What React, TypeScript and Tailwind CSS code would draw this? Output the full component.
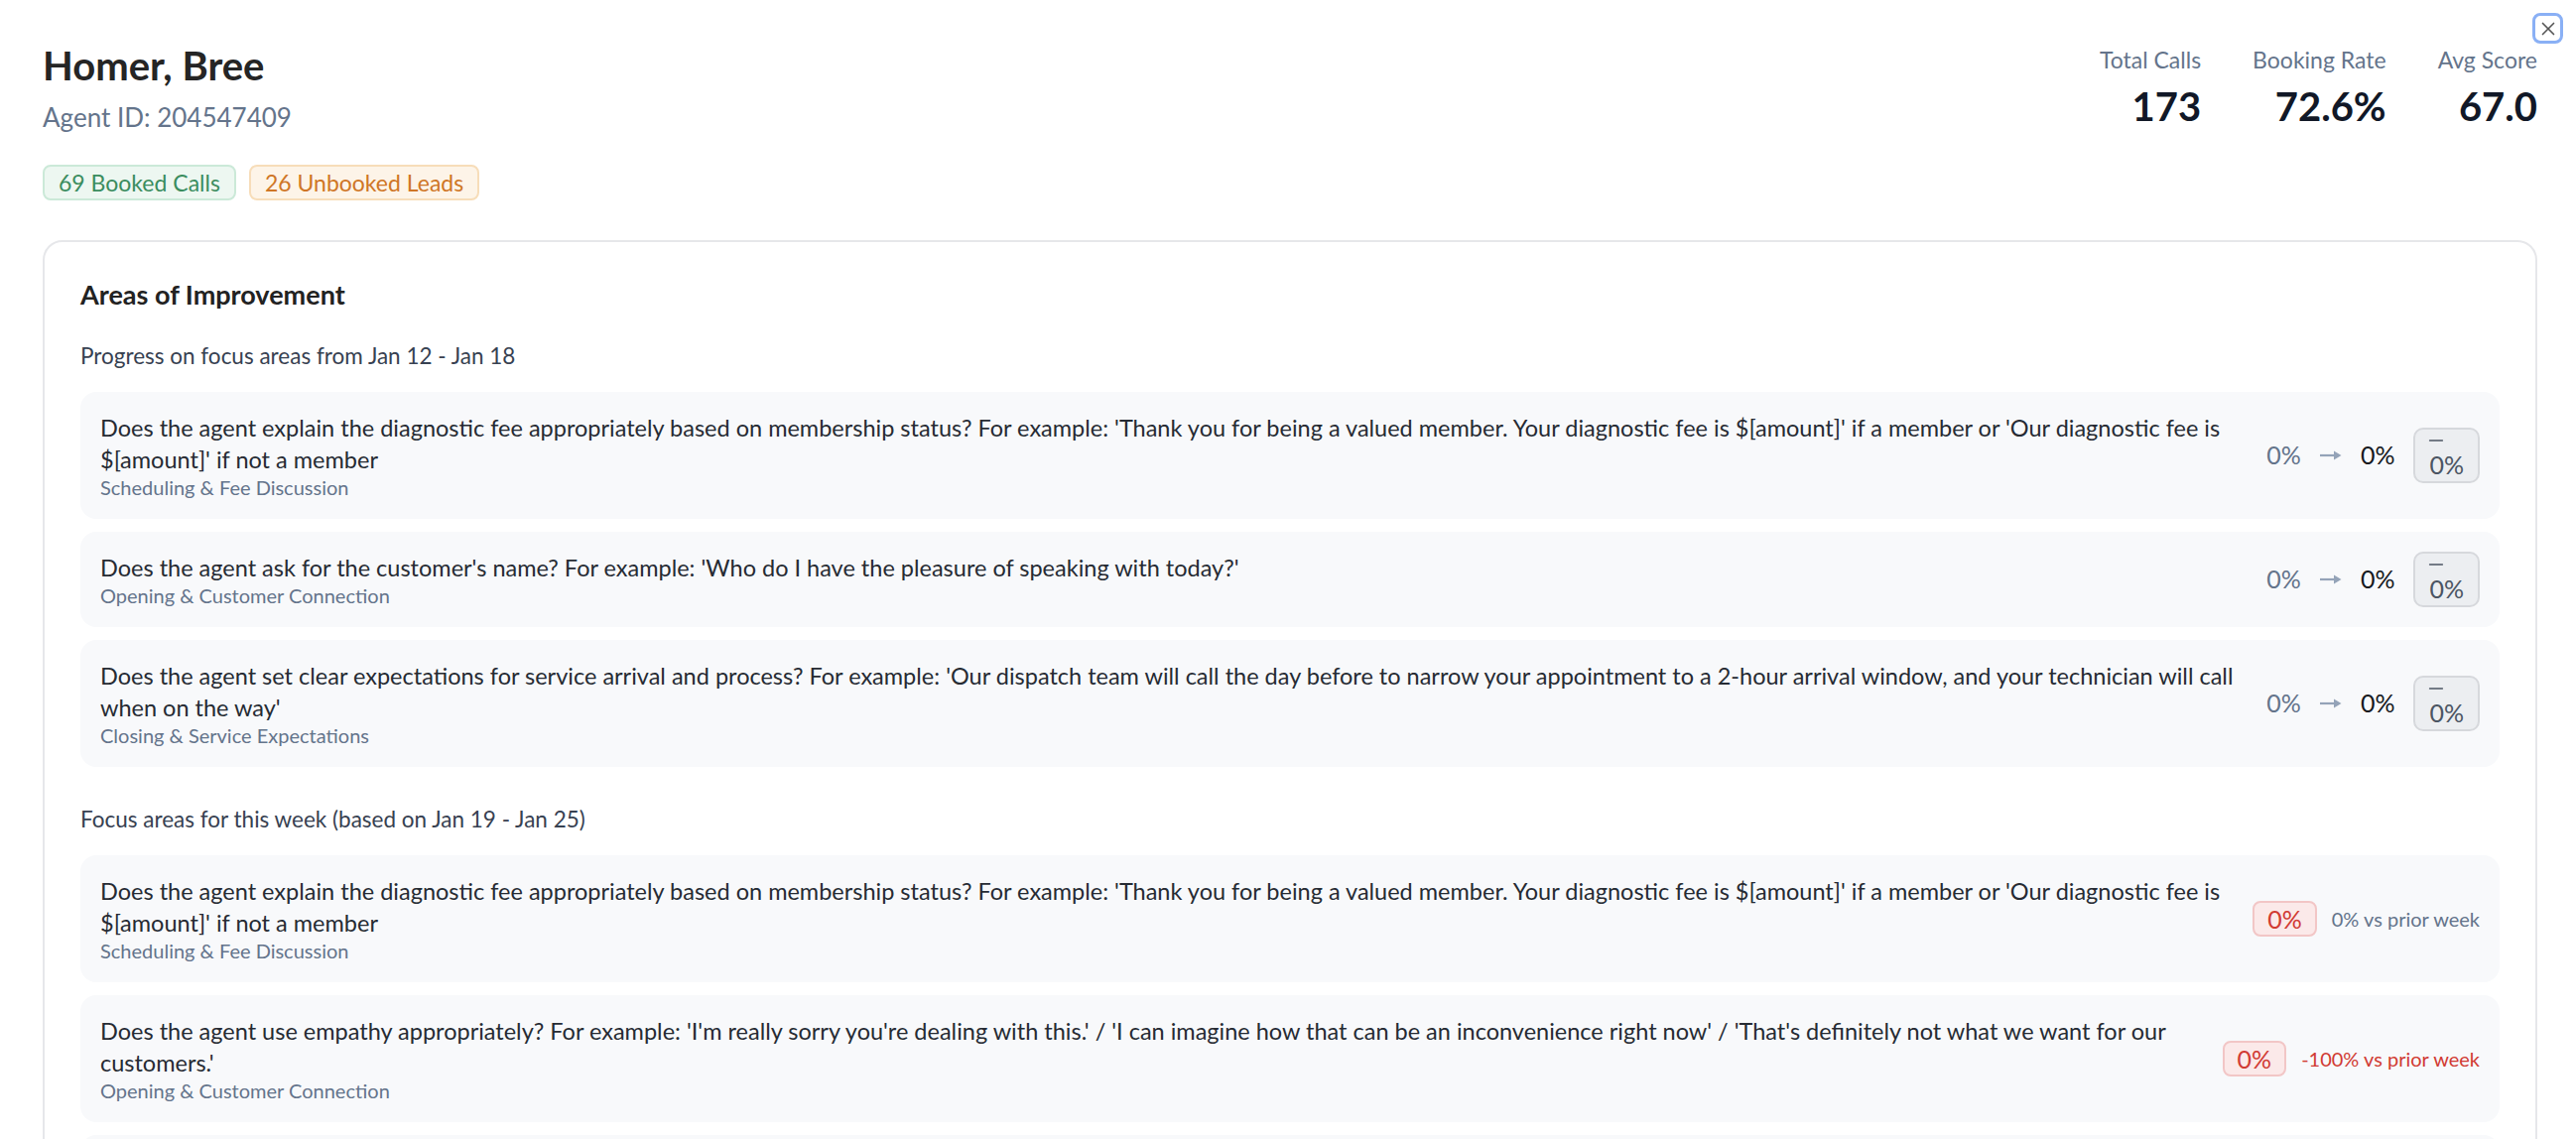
import { X, Minus } from 'lucide-react';

interface ProgressItem {
  question: string;
  category: string;
  before: string;
  after: string;
  change: string;
}

interface FocusItem {
  question: string;
  category: string;
  score: string;
  delta: string;
  negative?: boolean;
}

const FEE_Q =
  "Does the agent explain the diagnostic fee appropriately based on membership status? For example: 'Thank you for being a valued member. Your diagnostic fee is $[amount]' if a member or 'Our diagnostic fee is $[amount]' if not a member";

const progress: ProgressItem[] = [
  { question: FEE_Q, category: 'Scheduling & Fee Discussion', before: '0%', after: '0%', change: '0%' },
  {
    question:
      "Does the agent ask for the customer's name? For example: 'Who do I have the pleasure of speaking with today?'",
    category: 'Opening & Customer Connection',
    before: '0%',
    after: '0%',
    change: '0%',
  },
  {
    question:
      "Does the agent set clear expectations for service arrival and process? For example: 'Our dispatch team will call the day before to narrow your appointment to a 2-hour arrival window, and your technician will call when on the way'",
    category: 'Closing & Service Expectations',
    before: '0%',
    after: '0%',
    change: '0%',
  },
];

const focus: FocusItem[] = [
  { question: FEE_Q, category: 'Scheduling & Fee Discussion', score: '0%', delta: '0% vs prior week' },
  {
    question:
      "Does the agent use empathy appropriately? For example: 'I'm really sorry you're dealing with this.' / 'I can imagine how that can be an inconvenience right now' / 'That's definitely not what we want for our customers.'",
    category: 'Opening & Customer Connection',
    score: '0%',
    delta: '-100% vs prior week',
    negative: true,
  },
  {
    question:
      "Does the agent ask for the customer's name? For example: 'Who do I have the pleasure of speaking with today?'",
    category: 'Opening & Customer Connection',
    score: '0%',
    delta: '0% vs prior week',
  },
];

function Arrow() {
  return (
    <svg width="22" height="12" viewBox="0 0 22 12" className="text-[#94a3b8]">
      <path d="M0 6 H16" stroke="currentColor" strokeWidth="2.2" />
      <path d="M14 1.5 L21.5 6 L14 10.5 Z" fill="currentColor" />
    </svg>
  );
}

function QuestionText({ question, category }: { question: string; category: string }) {
  return (
    <div className="flex-1 min-w-0">
      <p className="text-[23.5px] leading-[32px] text-[#262b33]">{question}</p>
      <p className="text-[20px] leading-[24px] text-[#64748b]">{category}</p>
    </div>
  );
}

function ProgressRow({ item }: { item: ProgressItem }) {
  return (
    <div className="flex items-center gap-[32px] rounded-[16px] bg-[#f8f9fb] p-[20px]">
      <QuestionText question={item.question} category={item.category} />
      <div className="flex items-center gap-[19px] shrink-0">
        <span className="text-[25px] text-[#64748b]">{item.before}</span>
        <Arrow />
        <span className="text-[25px] text-[#16181d]">{item.after}</span>
        <div className="flex flex-col items-start rounded-[10px] border-2 border-[#d6d8dc] bg-[#eceef1] px-[14px] pb-[3px] text-[#4b5563]">
          <Minus size={22} strokeWidth={1.6} className="-ml-[4px]" />
          <span className="text-[25px] leading-[27px]">{item.change}</span>
        </div>
      </div>
    </div>
  );
}

function FocusRow({ item }: { item: FocusItem }) {
  return (
    <div className="flex items-center gap-[32px] rounded-[16px] bg-[#f8f9fb] p-[20px]">
      <QuestionText question={item.question} category={item.category} />
      <div className="flex items-center gap-[15px] shrink-0">
        <span className="h-[36px] rounded-[8px] border-2 border-[#f2c6c6] bg-[#fbe9e9] px-[13px] text-[25px] leading-[32px] text-[#d13b33]">
          {item.score}
        </span>
        <span className={item.negative ? 'text-[20px] text-[#d13b33]' : 'text-[20px] text-[#64748b]'}>
          {item.delta}
        </span>
      </div>
    </div>
  );
}

export default function App() {
  return (
    <div className="relative min-h-screen bg-white pl-[43px] pr-[39px] pt-[42px] font-['Lato',sans-serif]">
      <button className="absolute right-[13px] top-[13px] flex h-[31px] w-[31px] items-center justify-center rounded-[8px] border-[3px] border-[#8ab0f5] text-[#555]">
        <X size={22} strokeWidth={1.8} />
      </button>

      <div className="flex items-start justify-between">
        <div>
          <h1 className="text-[40px] leading-[48px] font-bold text-[#252525]">Homer, Bree</h1>
          <p className="mt-[10px] text-[26px] leading-[36px] text-[#64748b]">Agent ID: 204547409</p>
          <div className="mt-[30px] flex gap-[13px]">
            <span className="h-[36px] rounded-[8px] border-2 border-[#cbe9d8] bg-[#edf7f1] px-[14px] text-[23px] leading-[32px] text-[#3b8d5f]">
              69 Booked Calls
            </span>
            <span className="h-[36px] rounded-[8px] border-2 border-[#f7ddb9] bg-[#fdf4e8] px-[14px] text-[23px] leading-[32px] text-[#cf7626]">
              26 Unbooked Leads
            </span>
          </div>
        </div>

        <div className="flex gap-[52px] pt-[2px]">
          {[
            ['Total Calls', '173'],
            ['Booking Rate', '72.6%'],
            ['Avg Score', '67.0'],
          ].map(([label, value]) => (
            <div key={label} className="text-right">
              <p className="text-[23px] leading-[32px] text-[#64748b]">{label}</p>
              <p className="mt-[7px] text-[40px] leading-[48px] font-bold text-[#111827]">{value}</p>
            </div>
          ))}
        </div>
      </div>

      <div className="mt-[40px] rounded-[20px] border-2 border-[#e6e7ea] px-[36px] pt-[35px] pb-[36px]">
        <h2 className="text-[27px] leading-[36px] font-bold text-[#222]">Areas of Improvement</h2>

        <p className="mt-[28px] text-[22.5px] leading-[32px] text-[#374151]">
          Progress on focus areas from Jan 12 - Jan 18
        </p>
        <div className="mt-[20px] flex flex-col gap-[13px]">
          {progress.map((item, i) => (
            <ProgressRow key={i} item={item} />
          ))}
        </div>

        <p className="mt-[37px] text-[22.5px] leading-[32px] text-[#374151]">
          Focus areas for this week (based on Jan 19 - Jan 25)
        </p>
        <div className="mt-[20px] flex flex-col gap-[13px]">
          {focus.map((item, i) => (
            <FocusRow key={i} item={item} />
          ))}
        </div>
      </div>
    </div>
  );
}
